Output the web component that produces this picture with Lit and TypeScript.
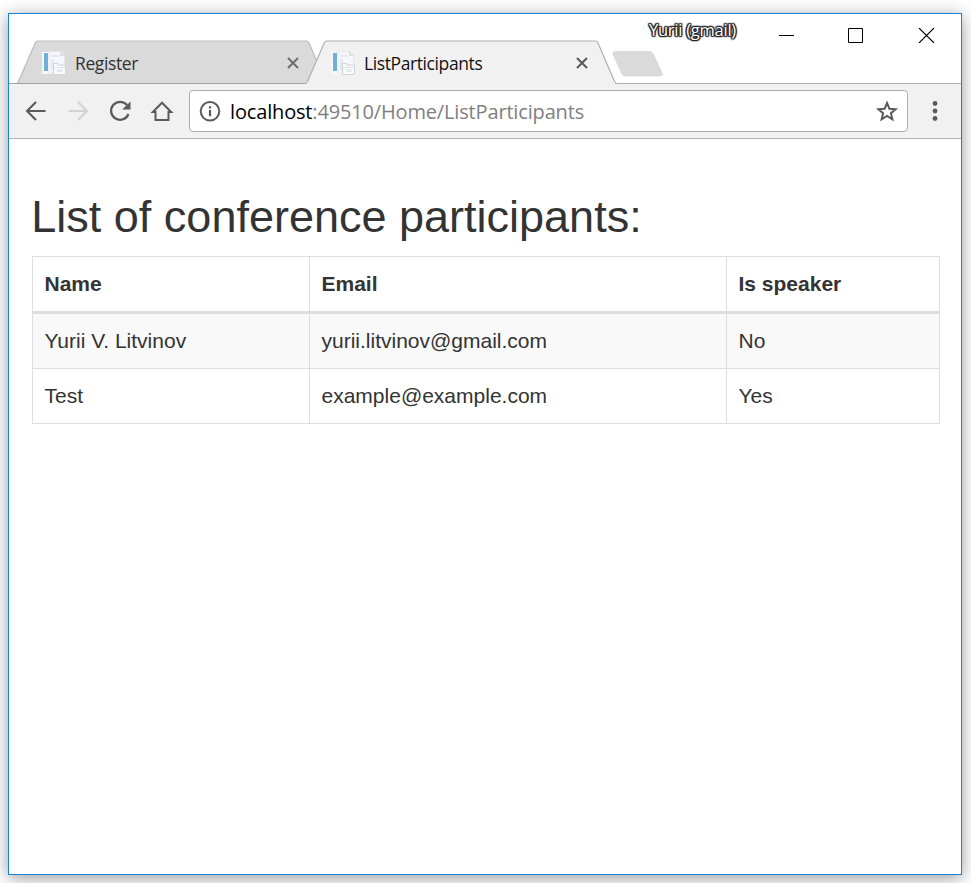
import { LitElement, html, css, svg } from "lit";
import { customElement, property } from "lit/decorators.js";

const participants = [
  { name: "Yurii V. Litvinov", email: "yurii.litvinov@gmail.com", speaker: "No" },
  { name: "Test", email: "example@example.com", speaker: "Yes" },
];

@customElement("browser-tab")
export class BrowserTab extends LitElement {
  static styles = css`
    :host { display: block; position: relative; width: 312px; height: 44px; flex: none; }
    .shape { position: absolute; left: 0; top: 0; display: block; overflow: visible; }
    .row { position: relative; display: flex; align-items: center; height: 44px; padding: 0 28px 0 26px; box-sizing: border-box; }
    .icon { display: block; flex: none; margin-top: 1px; }
    .label { flex: 1; margin-left: 9px; font: 17.5px/24px "Open Sans", "Noto Sans", sans-serif; letter-spacing: -0.4px; color: #333; padding-top: 1px; white-space: nowrap; }
    .label.on { color: #111; }
    .close { display: block; flex: none; margin-top: 2px; }
  `;
  @property() label = "";
  @property({ type: Boolean }) active = false;

  render() {
    const fill = this.active ? "#f1f1f1" : "#dadada";
    const outline = "M0 43.5 C1.5 43.3 1.8 42.8 2.5 41.5 L19.2 3 C20 1.4 20.6 1 22 1 H290.5 C292 1 292.4 1.4 293 3 L309.6 41.5 C310.3 43 310.6 43.5 312 43.5";
    return html`
      <svg class="shape" width="312" height="44" viewBox="0 0 312 44">
        <path d="${outline}" fill="${fill}" stroke="${this.active ? "#b0b0b0" : "#bcbcbc"}" stroke-width="1.2" />
        ${this.active
          ? svg`<rect x="2" y="42.6" width="308" height="1.4" fill="#f1f1f1" />`
          : svg`<path d="M-7 43.5H294" stroke="#a0a0a0" />`}
      </svg>
      <div class="row">
        <svg class="icon" width="24" height="24" viewBox="0 0 24 24">
          <path d="M0 1H14V23H0Z" fill="#f5f8fa" />
          <path d="M2 2H6V20H2Z" fill="#70afd6" />
          <path d="M7 .5H19L22.5 4V22H7Z" fill="#f5f7fa" stroke="#dfe3e8" stroke-width=".6" />
          <path d="M9 4H17V6H9ZM9 8H12V19H9Z" fill="#e5e8ef" />
          <path d="M18.5 .5V4.5H22.5" fill="#e4e8ec" stroke="#cfd4da" stroke-width=".8" />
          <path d="M11.5 14.5V12.5H16V14H23.5V23.5H11.5Z" fill="#f8f9fb" stroke="#cfd3dc" />
          <path d="M11.5 16.5H23.5" stroke="#dde1e8" />
          <path d="M15 18.5H20.5V21H15Z" fill="#e3e7ee" />
        </svg>
        <span class="label ${this.active ? "on" : ""}">${this.label}</span>
        <svg class="close" width="14" height="14" viewBox="0 0 14 14">
          <path d="M2 2L12 12M12 2L2 12" stroke="${this.active ? "#5a5a5a" : "#6d6d6d"}" stroke-width="2" />
        </svg>
      </div>
    `;
  }
}

@customElement("app-root")
export class AppRoot extends LitElement {
  static styles = css`
    :host { display: block; height: 883px; overflow: hidden; background: #fff; box-sizing: border-box; padding: 13px 9px 8px 8px; }
    .window { box-sizing: border-box; width: 954px; height: 862px; border: 1px solid #1883d7; background: #fff; box-shadow: 0 3px 16px rgba(0, 0, 0, 0.4); }
    .strip { display: flex; height: 70px; box-sizing: border-box; border-bottom: 1px solid #b0b0b0; }
    .tabs { display: flex; align-items: flex-end; height: 70px; padding-left: 7px; flex: none; }
    .first { z-index: 0; }
    .second { z-index: 1; margin-left: -23px; }
    .plus { flex: none; display: block; margin: 0 0 6px -6px; }
    .user { margin-top: 5px; margin-left: -16px; font: 16.5px/22px "Open Sans", "Noto Sans", sans-serif; color: #fff; letter-spacing: -0.25px; white-space: nowrap;
      text-shadow: 1px 0 1px #222, -1px 0 1px #222, 0 1px 1px #222, 0 -1px 1px #222, 1px 1px 1px #333, -1px -1px 1px #333, 1px -1px 1px #333, -1px 1px 1px #333, 0 0 2px #333; }
    .controls { display: flex; margin-left: auto; height: 42px; align-items: center; gap: 54px; padding-right: 26px; }
    .controls svg { display: block; }
    .bar { display: flex; align-items: center; height: 55px; box-sizing: border-box; background: #f1f1f1; border-bottom: 1px solid #b4b4b4; padding-left: 15px; }
    .bar svg { display: block; flex: none; }
    .nav { display: flex; gap: 18px; margin-right: 15px; }
    .address { display: flex; align-items: center; box-sizing: border-box; width: 719px; height: 42px; background: #fff; border: 1px solid #acacac; border-radius: 4px; padding: 0 8px; flex: none; }
    .url { flex: 1; margin-left: 8px; padding-top: 1px; font: 20px/28px "Open Sans", "Noto Sans", sans-serif; letter-spacing: -0.16px; color: #808080; white-space: nowrap; }
    .host { color: #000; }
    .more { margin-left: 15px; }
    .page { padding: 53px 21px 0 23px; font-family: "Liberation Sans", Arial, sans-serif; color: #333; }
    .title { margin: 0 0 15px -0.7px; font-size: 45px; line-height: 49px; font-weight: 400; white-space: nowrap; }
    .table { width: 908px; border-collapse: separate; border-spacing: 0; table-layout: fixed; font-size: 21px; line-height: 30px; border-top: 1px solid #ddd; border-left: 1px solid #ddd; }
    .cell { box-sizing: border-box; text-align: left; padding: 12px 12px 12px 11.5px; height: 55px; border-right: 1px solid #ddd; border-bottom: 1px solid #ddd; font-weight: 400; }
    .head { font-weight: 700; height: 57px; border-bottom-width: 3px; }
    .c1 { width: 277px; }
    .c2 { width: 417px; }
    .odd { background: #f9f9f9; }
  `;

  render() {
    return html`
      <div class="window">
        <div class="strip">
          <div class="tabs">
            <browser-tab class="first" label="Register"></browser-tab>
            <browser-tab class="second" label="ListParticipants" active></browser-tab>
            <svg class="plus" width="54" height="28" viewBox="0 0 54 28">
              <path d="M5 1.5H38.5Q41 1.5 42 3.5L51 23Q52 26 49 26H15Q12 26 10.8 24L2 4Q1 1.5 5 1.5Z" fill="#dadada" stroke="#d2d2d2" stroke-width=".7" />
            </svg>
          </div>
          <div class="user">Yurii (gmail)</div>
          <div class="controls">
            <svg width="15" height="15" viewBox="0 0 15 15"><path d="M0 7.5H15" stroke="#000" /></svg>
            <svg width="15" height="15" viewBox="0 0 15 15"><path d="M.5 .5H14.5V14.5H.5Z" fill="none" stroke="#000" /></svg>
            <svg width="18" height="15" viewBox="0 0 18 15"><path d="M2 0L17 15M17 0L2 15" stroke="#000" stroke-width="1.1" /></svg>
          </div>
        </div>
        <div class="bar">
          <div class="nav">
            <svg width="24" height="24" viewBox="0 0 24 24"><path d="M21.5 12H4M12 3L3 12L12 21" fill="none" stroke="#5a5a5a" stroke-width="2.1" /></svg>
            <svg width="24" height="24" viewBox="0 0 24 24"><path d="M2.5 12H20M12 3L21 12L12 21" fill="none" stroke="#d2d2d2" stroke-width="2.1" /></svg>
            <svg width="24" height="24" viewBox="0 0 24 24"><path d="M19 6A9 9 0 1 0 20.5 15" fill="none" stroke="#5a5a5a" stroke-width="2.2" /><path d="M22.5 2.4V10.5H14.2Z" fill="#5a5a5a" /></svg>
            <svg width="24" height="24" viewBox="0 0 24 24"><path d="M2.8 13H5.5V21H18.5V13H21.2L12 3.7Z" fill="none" stroke="#5a5a5a" stroke-width="2" /></svg>
          </div>
          <div class="address">
            <svg width="24" height="24" viewBox="0 0 24 24"><circle cx="12" cy="12.3" r="9.3" fill="none" stroke="#5a5a5a" stroke-width="2" /><path d="M10.9 11H13.1V17.2H10.9ZM10.9 7.3H13.1V9.5H10.9Z" fill="#5a5a5a" /></svg>
            <div class="url"><span class="host">localhost</span>:49510/Home/ListParticipants</div>
            <svg width="24" height="24" viewBox="0 0 24 24"><path d="M12 4L14.4 9.7L20.6 10.2L15.9 14.2L17.4 20.3L12 17L6.6 20.3L8.1 14.2L3.4 10.2L9.6 9.7Z" fill="none" stroke="#5a5a5a" stroke-width="2" /></svg>
          </div>
          <svg class="more" width="24" height="24" viewBox="0 0 24 24"><g fill="#5a5a5a"><circle cx="12" cy="4.5" r="2.4" /><circle cx="12" cy="12" r="2.4" /><circle cx="12" cy="19.5" r="2.4" /></g></svg>
        </div>
        <div class="page">
          <h2 class="title">List of conference participants:</h2>
          <table class="table">
            <thead>
              <tr><th class="cell head c1">Name</th><th class="cell head c2">Email</th><th class="cell head">Is speaker</th></tr>
            </thead>
            <tbody>
              ${participants.map((p, i) => html`
                <tr class="${i % 2 ? "" : "odd"}">
                  <td class="cell">${p.name}</td><td class="cell">${p.email}</td><td class="cell">${p.speaker}</td>
                </tr>`)}
            </tbody>
          </table>
        </div>
      </div>
    `;
  }
}
